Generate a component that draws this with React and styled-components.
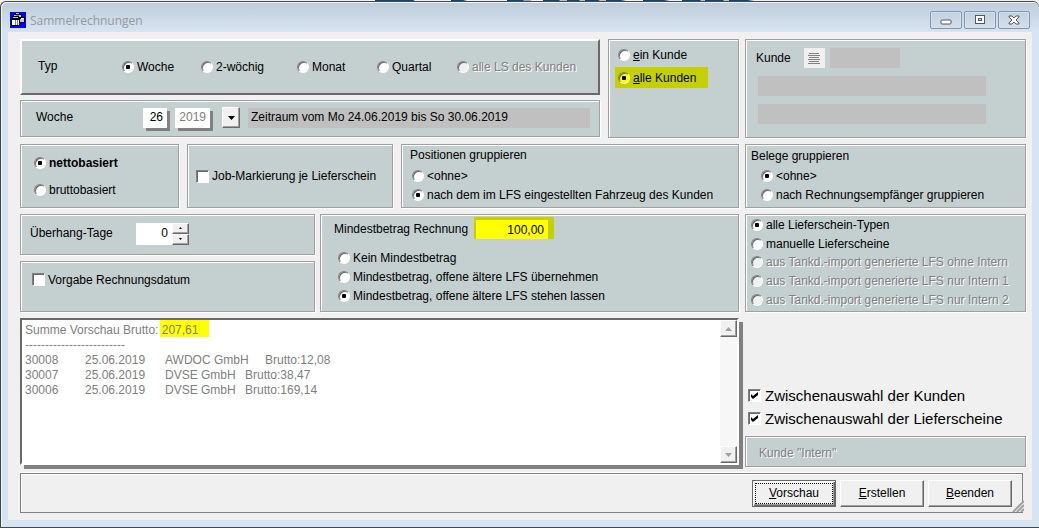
import React, { useState } from "react";
import styled, { createGlobalStyle, css } from "styled-components";

const color = {
  face: "#f0f0f0",
  panel: "#c4cfcf",
  field: "#c0c0c0",
  line: "#a0a0a0",
  shade: "#808080",
  dark: "#696969",
  frame: "#d7e4f2",
  mark: "#ffff00",
  markShade: "#c4d000",
};

const GlobalStyle = createGlobalStyle`
  * { box-sizing: border-box; }
  body { margin: 0; background: #f4f3ea; }
  body, button, input, textarea {
    font-family: "Liberation Sans", Arial, sans-serif;
    font-size: 12px;
    color: #000;
  }
`;

const Desktop = styled.div`
  min-height: 100vh;
  padding-top: 1px;
  display: flex;
  flex-direction: column;
  background: linear-gradient(
      90deg,
      #f4f3ea 375px, #004a8c 375px 413px, #f4f3ea 415px 451px, #004a8c 451px 463px,
      #f4f3ea 467px 507px, #004a8c 507px 523px, #a8a8a0 524px 530px, #f4f3ea 532px 543px,
      #004a8c 543px 559px, #c8c4b8 560px 567px, #004a8c 567px 579px, #c8c4b8 580px 585px,
      #004a8c 585px 598px, #c8c4b8 600px 606px, #004a8c 606px 621px, #f4f3ea 626px 643px,
      #004a8c 643px 664px, #f4f3ea 670px 682px, #004a8c 682px 700px, #c8c4b8 701px 705px,
      #004a8c 705px 723px, #c8c4b8 724px 729px, #004a8c 729px 748px, #f4f3ea 754px
    );
`;

const Window = styled.main`
  flex: 1;
  display: flex;
  flex-direction: column;
  padding: 0 7px 7px;
  border: 1px solid #44474c;
  border-right: 0;
  border-radius: 6px 6px 0 0;
  background: linear-gradient(#bfcddb, ${color.frame} 30px);
  box-shadow: inset 1px 1px 0 #eef4fa;
`;

const TitleBar = styled.header`
  height: 30px;
  display: flex;
  align-items: center;
  gap: 4px;
  padding: 6px 2px 0;
`;

const Title = styled.h1`
  flex: 1;
  margin: 0;
  padding-top: 1px;
  font: 400 12px/16px "Open Sans", "Noto Sans", sans-serif;
  color: #97999c;
`;

const Controls = styled.div`
  display: flex;
  gap: 2px;
`;

const ControlButton = styled.button`
  width: 32px;
  height: 18px;
  padding: 0;
  display: grid;
  place-items: center;
  background: linear-gradient(#c3d0de, #d2dfed);
  border: 1px solid #8494ae;
  border-radius: 2px;
  box-shadow: inset 0 0 0 1px #d5e1ee;
`;

const Client = styled.form`
  flex: 1;
  display: grid;
  grid-template-columns: minmax(0, 1fr) 281px;
  grid-template-rows: 99px 64px 98px minmax(149px, 1fr) 40px;
  gap: 6px;
  padding: 7px 6px 7px 12px;
  background: ${color.face};
`;

const Panel = styled.section`
  display: flex;
  flex-direction: ${(p) => (p.$column ? "column" : "row")};
  align-items: ${(p) => (p.$column ? "flex-start" : "center")};
  padding: ${(p) => p.$pad || "0"};
  background: ${color.panel};
  ${(p) =>
    p.$raised
      ? css`
          border: 2px solid #fff;
          border-color: #fff ${color.dark} ${color.dark} #fff;
        `
      : css`
          border: 1px solid ${color.line};
          box-shadow: inset 1px 1px 0 #fff, 1px 1px 0 #fff;
        `}
`;

const TopLeft = styled.div`
  display: grid;
  grid-template-columns: minmax(0, 1fr) 131px;
  gap: 8px;
`;

const Period = styled.div`
  display: grid;
  grid-template-rows: 56px 37px;
  gap: 5px;
`;

const BasisRow = styled.div`
  display: grid;
  grid-template-columns: 159px 206px minmax(0, 1fr);
  gap: 8px;
`;

const AmountRow = styled.div`
  display: grid;
  grid-template-columns: 295px minmax(0, 1fr);
  gap: 5px;
`;

const Days = styled.div`
  display: grid;
  grid-template-rows: 41px 51px;
  gap: 6px;
`;

const captionStyle = css`
  width: ${(p) => p.$width || "auto"};
  line-height: 19px;
  white-space: nowrap;
`;

const Caption = styled.span`
  ${captionStyle}
`;

const FieldLabel = styled.label`
  ${captionStyle}
`;

const Kinds = styled.div`
  display: grid;
  grid-template-columns: 79px 96px 80px 80px auto;
`;

const Option = styled.label`
  display: flex;
  align-items: center;
  gap: ${(p) => (p.$large ? "4px" : "3px")};
  height: ${(p) => p.$height || "19px"};
  padding: ${(p) => p.$pad || "0"};
  font-size: ${(p) => (p.$large ? "15px" : "12px")};
  font-weight: ${(p) => (p.$bold ? 700 : 400)};
  white-space: nowrap;
  ${(p) => p.$disabled && `color: ${color.shade}; text-shadow: 1px 1px 0 #fff;`}
  ${(p) => p.$marked && `background: ${color.markShade};`}
`;

const RadioInput = styled.input`
  appearance: none;
  flex: none;
  width: 12px;
  height: 12px;
  margin: 0;
  display: grid;
  place-items: center;
  border: 1px solid;
  border-color: ${color.shade} #fff #fff ${color.shade};
  border-radius: 50%;
  background: ${(p) => (p.$marked ? color.mark : "#fff")};
  box-shadow: inset 1px 1px 0 ${color.dark};
  &:disabled { background: ${color.face}; }
  &:checked::after {
    content: "";
    width: 4px;
    height: 4px;
    border-radius: 1px;
    background: #000;
  }
`;

const CheckInput = styled.input`
  appearance: none;
  flex: none;
  width: 13px;
  height: 13px;
  margin: 0;
  display: grid;
  place-items: center;
  border: 1px solid;
  border-color: ${color.shade} #fff #fff ${color.shade};
  background: #fff;
  box-shadow: inset 1px 1px 0 ${color.dark};
  &:checked::after {
    content: "";
    width: 7px;
    height: 7px;
    background: #000;
    clip-path: polygon(0 28%, 28% 58%, 100% 0, 100% 42%, 28% 100%, 0 72%);
  }
`;

const OptionList = styled.div`
  display: flex;
  flex-direction: column;
  align-self: stretch;
  align-items: flex-start;
  justify-content: ${(p) => (p.$spread ? "space-around" : "flex-start")};
  flex: ${(p) => (p.$spread ? 1 : "none")};
  gap: ${(p) => p.$gap || "0"};
  padding: ${(p) => p.$pad || "0"};
`;

const TextBox = styled.input`
  width: ${(p) => p.$width};
  height: ${(p) => p.$height || "20px"};
  padding: 0 4px 2px 3px;
  border: 0;
  border-radius: 0;
  background: ${(p) => (p.$flat ? color.field : "#fff")};
  text-align: ${(p) => (p.$right ? "right" : "left")};
  ${(p) => p.$grow && "flex: 1; min-width: 0;"}
  ${(p) => p.$shadow && `box-shadow: 3px 3px 0 ${color.shade};`}
  &:disabled { color: ${color.shade}; }
`;

const WeekFields = styled.div`
  flex: 1;
  display: flex;
  align-items: center;
  gap: 8px;
`;

const bevel = css`
  padding: 0;
  display: grid;
  place-items: center;
  background: ${color.face};
  border: 1px solid;
  border-color: #fff ${color.dark} ${color.dark} #fff;
  box-shadow: inset -1px -1px 0 ${color.line};
`;

const DropButton = styled.button`
  ${bevel}
  width: 18px;
  height: 21px;
  margin-left: 4px;
`;

const SpinButtons = styled.div`
  display: grid;
  grid-template-rows: 11px 11px;
  width: 17px;
`;

const SmallButton = styled.button`
  ${bevel}
`;

const AmountBox = styled.div`
  padding: 3px 6px 0 2px;
  background: ${color.markShade};
`;

const AmountInput = styled.input`
  display: block;
  width: 72px;
  height: 19px;
  padding: 0 4px;
  border: 0;
  background: ${color.mark};
  text-align: right;
`;

const Line = styled.div`
  display: flex;
  align-items: ${(p) => (p.$end ? "flex-end" : "center")};
  gap: ${(p) => p.$gap || "0"};
`;

const ListButton = styled.button`
  width: 21px;
  height: 20px;
  padding: 0;
  display: grid;
  place-items: center;
  border: 0;
  background: ${color.face};
`;

const Memo = styled.div`
  position: relative;
  display: flex;
  margin-bottom: 2px;
  border: 2px solid;
  border-color: ${color.dark} #fff #fff ${color.dark};
  background: #fff;
  box-shadow: 4px 4px 0 ${color.shade};
`;

const MemoMark = styled.div`
  position: absolute;
  left: 138px;
  top: 0;
  width: 49px;
  height: 17px;
  background: ${color.mark};
`;

const MemoText = styled.textarea`
  position: relative;
  flex: 1;
  min-width: 0;
  padding: 3px 3px 0;
  border: 0;
  resize: none;
  overflow: hidden;
  background: transparent;
  color: ${color.shade};
  line-height: 15px;
  tab-size: 20px;
  white-space: pre;
`;

const ScrollTrack = styled.div`
  width: 17px;
  display: flex;
  flex-direction: column;
  justify-content: space-between;
  background: #f7f7f7;
`;

const ScrollButton = styled.button`
  ${bevel}
  height: 17px;
`;

const Side = styled.div`
  display: flex;
  flex-direction: column;
  justify-content: flex-end;
`;

const InternPanel = styled(Panel)`
  height: 31px;
  margin-top: 6px;
  color: ${color.shade};
  text-shadow: 1px 1px 0 #fff;
`;

const ActionBar = styled.footer`
  position: relative;
  grid-column: 1 / -1;
  display: flex;
  align-items: center;
  justify-content: flex-end;
  gap: 4px;
  margin-right: 3px;
  padding-right: 10px;
  border: 1px solid ${color.shade};
  box-shadow: inset 1px 1px 0 #fff, 0 -1px 0 #fff;
`;

const ActionButton = styled.button`
  width: 84px;
  height: 27px;
  padding: 2px;
  background: ${color.face};
  border: 1px solid;
  border-color: #fff ${color.dark} ${color.dark} #fff;
  box-shadow: inset -1px -1px 0 ${color.line};
  ${(p) =>
    p.$default &&
    css`
      border-color: ${color.dark};
      box-shadow: inset 1px 1px 0 #fff, inset -1px -1px 0 ${color.dark}, inset -2px -2px 0 ${color.line};
    `}
`;

const FocusFrame = styled.span`
  display: grid;
  place-items: center;
  height: 100%;
  border: 1px ${(p) => (p.$on ? "dotted #000" : "solid transparent")};
`;

const Grip = styled.svg`
  position: absolute;
  right: -2px;
  bottom: 0;
`;

function Radio({ group, value, state, marked, children, ...rest }) {
  const [current, setCurrent] = state;
  return (
    <Option $marked={marked} {...rest}>
      <RadioInput
        type="radio"
        name={group}
        checked={current === value}
        disabled={rest.$disabled}
        onChange={() => setCurrent(value)}
        $marked={marked}
      />
      <span>{children}</span>
    </Option>
  );
}

function Check({ defaultChecked, children, ...rest }) {
  return (
    <Option {...rest}>
      <CheckInput type="checkbox" defaultChecked={defaultChecked} />
      <span>{children}</span>
    </Option>
  );
}

function Arrow({ up, size = 7, fill = "#000" }) {
  const h = (size + 1) / 2;
  const d = up ? `M0 ${h}L${size / 2} 0L${size} ${h}z` : `M0 0H${size}L${size / 2} ${h}z`;
  return (
    <svg width={size} height={h} aria-hidden="true">
      <path d={d} fill={fill} />
    </svg>
  );
}

function AppIcon() {
  return (
    <svg width="16" height="16" aria-hidden="true" shapeRendering="crispEdges">
      <path fill="#0000ff" d="M0 0h16v16H0z" />
      <path fill="#000" d="M4 1h6v1h2v3h3v6H9v3H1V7h1V4h2z" />
      <path fill="#c8c8c8" d="M6 1h3v1H6zM4 3h2v1H4zM3 5h5v1H3zM9 3h2v2H9zM10 7h4v3h-4z" />
      <path fill="#fff" d="M2 8h3v5H2zM6 8h1v5H6zM8 8h1v5H8zM11 6h3v1h-3z" />
      <path fill="#808080" d="M6 3h3v1H6zM5 8h1v5H5zM7 8h1v5H7z" />
    </svg>
  );
}

const memo = [
  "Summe Vorschau Brutto: 207,61",
  "-------------------------",
  "30008\t\t25.06.2019\tAWDOC GmbH\tBrutto:12,08",
  "30007\t\t25.06.2019\tDVSE GmbH\tBrutto:38,47",
  "30006\t\t25.06.2019\tDVSE GmbH\tBrutto:169,14",
].join("\n");

export default function App() {
  const kind = useState("woche");
  const scope = useState("alle");
  const basis = useState("netto");
  const positions = useState("fahrzeug");
  const receipts = useState("ohne");
  const minimum = useState("stehen");
  const notes = useState("alle");
  const [days, setDays] = useState(0);

  return (
    <>
      <GlobalStyle />
      <Desktop>
        <Window>
          <TitleBar>
            <AppIcon />
            <Title>Sammelrechnungen</Title>
            <Controls>
              <ControlButton type="button" aria-label="Minimieren">
                <svg width="12" height="12" aria-hidden="true">
                  <rect x="1" y="6" width="10" height="4" rx="1" fill="#fff" stroke="#535666" />
                </svg>
              </ControlButton>
              <ControlButton type="button" aria-label="Maximieren">
                <svg width="12" height="10" aria-hidden="true" shapeRendering="crispEdges">
                  <path d="M1 0h10v9H1z" fill="#535666" />
                  <path d="M2 1h8v7H2z" fill="#fff" />
                  <path d="M4 3h4v3H4z" fill="#535666" />
                  <path d="M5 4h2v1H5z" fill="#d7e4f2" />
                </svg>
              </ControlButton>
              <ControlButton type="button" aria-label="Schließen">
                <svg width="12" height="10" aria-hidden="true">
                  <path
                    d="M1 1h3l2 2 2-2h3v1L8 5l3 3v1H8L6 7 4 9H1V8l3-3-3-3z"
                    fill="#fff"
                    stroke="#535666"
                  />
                </svg>
              </ControlButton>
            </Controls>
          </TitleBar>

          <Client onSubmit={(e) => e.preventDefault()}>
            <TopLeft>
              <Period>
                <Panel $raised $pad="0 0 1px 16px">
                  <Caption $width="84px">Typ</Caption>
                  <Kinds>
                    <Radio group="kind" value="woche" state={kind}>Woche</Radio>
                    <Radio group="kind" value="zwei" state={kind}>2-wöchig</Radio>
                    <Radio group="kind" value="monat" state={kind}>Monat</Radio>
                    <Radio group="kind" value="quartal" state={kind}>Quartal</Radio>
                    <Radio group="kind" value="ls" state={kind} $disabled>alle LS des Kunden</Radio>
                  </Kinds>
                </Panel>
                <Panel $pad="0 9px 2px 15px">
                  <FieldLabel htmlFor="week" $width="107px">Woche</FieldLabel>
                  <WeekFields>
                    <TextBox id="week" $width="24px" $right $shadow defaultValue="26" />
                    <TextBox aria-label="Jahr" $width="35px" $right $shadow disabled defaultValue="2019" />
                    <DropButton type="button" aria-label="Woche wählen"><Arrow /></DropButton>
                    <TextBox
                      aria-label="Zeitraum"
                      $flat
                      $grow
                      readOnly
                      value="Zeitraum vom Mo 24.06.2019 bis So 30.06.2019"
                    />
                  </WeekFields>
                </Panel>
              </Period>
              <Panel $column $pad="4px 6px">
                <OptionList $gap="2px">
                  <Radio group="scope" value="ein" state={scope} $height="21px" $pad="0 12px 0 3px">
                    <u>e</u>in Kunde
                  </Radio>
                  <Radio group="scope" value="alle" state={scope} marked $height="21px" $pad="0 12px 0 3px">
                    <u>a</u>lle Kunden
                  </Radio>
                </OptionList>
              </Panel>
            </TopLeft>

            <Panel $column $pad="8px 10px">
              <Line>
                <FieldLabel htmlFor="customer" $width="48px">Kunde</FieldLabel>
                <Line $gap="5px">
                  <ListButton type="button" aria-label="Kundenliste">
                    <svg width="13" height="13" aria-hidden="true" shapeRendering="crispEdges">
                      <path
                        stroke="#808080"
                        d="M1 1.5h10M0 3.5h12M1 5.5h10M0 7.5h12M1 9.5h10M0 11.5h12"
                      />
                    </svg>
                  </ListButton>
                  <TextBox id="customer" $width="70px" $flat readOnly />
                </Line>
              </Line>
              <OptionList $gap="8px" $pad="8px 0 0 2px">
                <TextBox aria-label="Name" $width="228px" $flat readOnly />
                <TextBox aria-label="Ort" $width="228px" $flat readOnly />
              </OptionList>
            </Panel>

            <BasisRow>
              <Panel $column $pad="8px 13px">
                <OptionList $gap="8px">
                  <Radio group="basis" value="netto" state={basis} $bold>nettobasiert</Radio>
                  <Radio group="basis" value="brutto" state={basis}>bruttobasiert</Radio>
                </OptionList>
              </Panel>
              <Panel $pad="0 8px">
                <Check>Job-Markierung je Lieferschein</Check>
              </Panel>
              <Panel $column $pad="1px 8px">
                <Caption>Positionen gruppieren</Caption>
                <OptionList $pad="1px 2px">
                  <Radio group="positions" value="ohne" state={positions}>&lt;ohne&gt;</Radio>
                  <Radio group="positions" value="fahrzeug" state={positions}>
                    nach dem im LFS eingestellten Fahrzeug des Kunden
                  </Radio>
                </OptionList>
              </Panel>
            </BasisRow>

            <Panel $column $pad="2px 5px">
              <Caption>Belege gruppieren</Caption>
              <OptionList $pad="0 10px">
                <Radio group="receipts" value="ohne" state={receipts}>&lt;ohne&gt;</Radio>
                <Radio group="receipts" value="empf" state={receipts}>
                  nach Rechnungsempfänger gruppieren
                </Radio>
              </OptionList>
            </Panel>

            <AmountRow>
              <Days>
                <Panel $pad="0 9px 2px">
                  <FieldLabel htmlFor="days" $width="106px">Überhang-Tage</FieldLabel>
                  <TextBox
                    id="days"
                    $width="36px"
                    $height="22px"
                    $right
                    value={days}
                    onChange={(e) => setDays(Number(e.target.value) || 0)}
                  />
                  <SpinButtons>
                    <SmallButton type="button" aria-label="Mehr" onClick={() => setDays(days + 1)}>
                      <Arrow up size={3} />
                    </SmallButton>
                    <SmallButton type="button" aria-label="Weniger" onClick={() => setDays(Math.max(0, days - 1))}>
                      <Arrow size={3} />
                    </SmallButton>
                  </SpinButtons>
                </Panel>
                <Panel $column $pad="8px 11px">
                  <Check>Vorgabe Rechnungsdatum</Check>
                </Panel>
              </Days>
              <Panel $column $pad="2px 13px">
                <Line $end>
                  <FieldLabel htmlFor="amount" $width="140px">Mindestbetrag Rechnung</FieldLabel>
                  <AmountBox>
                    <AmountInput id="amount" defaultValue="100,00" />
                  </AmountBox>
                </Line>
                <OptionList $pad="9px 4px 0">
                  <Radio group="minimum" value="kein" state={minimum}>Kein Mindestbetrag</Radio>
                  <Radio group="minimum" value="neu" state={minimum}>
                    Mindestbetrag, offene ältere LFS übernehmen
                  </Radio>
                  <Radio group="minimum" value="stehen" state={minimum}>
                    Mindestbetrag, offene ältere LFS stehen lassen
                  </Radio>
                </OptionList>
              </Panel>
            </AmountRow>

            <Panel $pad="1px 5px 2px">
              <OptionList $spread>
                <Radio group="notes" value="alle" state={notes} $height="18px">alle Lieferschein-Typen</Radio>
                <Radio group="notes" value="manuell" state={notes} $height="18px">manuelle Lieferscheine</Radio>
                <Radio group="notes" value="ohne" state={notes} $height="18px" $disabled>
                  aus Tankd.-import generierte LFS ohne Intern
                </Radio>
                <Radio group="notes" value="i1" state={notes} $height="18px" $disabled>
                  aus Tankd.-import generierte LFS nur Intern 1
                </Radio>
                <Radio group="notes" value="i2" state={notes} $height="18px" $disabled>
                  aus Tankd.-import generierte LFS nur Intern 2
                </Radio>
              </OptionList>
            </Panel>

            <Memo>
              <MemoMark />
              <MemoText aria-label="Vorschau" readOnly value={memo} />
              <ScrollTrack>
                <ScrollButton type="button" aria-label="Nach oben"><Arrow up fill={color.line} /></ScrollButton>
                <ScrollButton type="button" aria-label="Nach unten"><Arrow fill={color.line} /></ScrollButton>
              </ScrollTrack>
            </Memo>

            <Side>
              <Check defaultChecked $large $height="23px" $pad="0 3px">Zwischenauswahl der Kunden</Check>
              <Check defaultChecked $large $height="23px" $pad="0 3px">Zwischenauswahl der Lieferscheine</Check>
              <InternPanel $pad="2px 13px 0">Kunde "Intern"</InternPanel>
            </Side>

            <ActionBar>
              <ActionButton type="button" $default>
                <FocusFrame $on><span><u>V</u>orschau</span></FocusFrame>
              </ActionButton>
              <ActionButton type="button">
                <FocusFrame><span><u>E</u>rstellen</span></FocusFrame>
              </ActionButton>
              <ActionButton type="button">
                <FocusFrame><span><u>B</u>eenden</span></FocusFrame>
              </ActionButton>
              <Grip width="12" height="12" aria-hidden="true">
                <path d="M0 12L12 0V12z" fill={color.face} />
                <path d="M1 12L12 1M5 12L12 5M9 12L12 9" stroke={color.line} strokeWidth="2" />
              </Grip>
            </ActionBar>
          </Client>
        </Window>
      </Desktop>
    </>
  );
}
